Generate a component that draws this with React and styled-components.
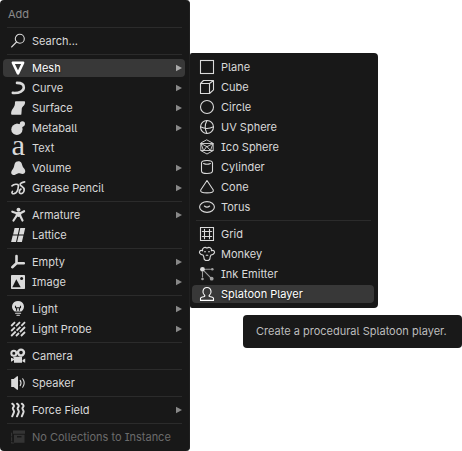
import React from 'react';
import styled, { createGlobalStyle } from 'styled-components';

const GlobalStyle = createGlobalStyle`
  *, *::before, *::after { box-sizing: border-box; }
  body {
    margin: 0;
    background: #fff;
    overflow: hidden;
    font-family: Inter, "Noto Sans", sans-serif;
    font-size: 11px;
    font-feature-settings: "cv08", "cv05";
  }
`;

const Desktop = styled.main`
  position: relative;
  width: 462px;
  height: 451px;
`;

const Panel = styled.div`
  display: flex;
  flex-direction: column;
  padding: 4px 4px 4px 3px;
  background: #181818;
  color: #d9d9d9;
`;

const MainMenu = styled(Panel)`
  width: 190px;
  height: 451px;
  border-radius: 4px;
  border-right: 1px solid #202020;
`;

const SubMenu = styled(Panel)`
  position: absolute;
  left: 190px;
  top: 53px;
  width: 188px;
  height: 255px;
  padding-left: 2px;
  border-radius: 2px 4px 4px 2px;
`;

const Title = styled.div`
  height: 20px;
  padding-left: 5px;
  line-height: 21px;
  color: #8a8a8a;
`;

const Item = styled.div`
  display: flex;
  align-items: center;
  height: 18px;
  margin: 1px 0;
  padding: 0 3px 0 7px;
  border-radius: 4px;
  white-space: nowrap;
  background: ${(p) => (p.$active ? '#383838' : 'transparent')};
  color: ${(p) => (p.$active ? '#fff' : p.$disabled ? '#6b6b6b' : 'inherit')};
  text-shadow: ${(p) => (p.$active ? '0 1px 2px #0009' : 'none')};
`;

const Label = styled.span`
  flex: 1;
  margin-left: 6px;
  line-height: 18px;
`;

const Separator = styled.div`
  height: 1px;
  margin: 3px 3px 3px 4px;
  flex: none;
  background: #2b2b2b;
`;

const Glyph = styled.svg`
  flex: none;
  width: 16px;
  height: 16px;
  overflow: visible;
  fill: none;
  stroke: ${(p) => (p.$dim ? '#343434' : p.$bright ? '#fff' : '#dadada')};
  color: ${(p) => (p.$dim ? '#343434' : p.$bright ? '#fff' : '#dadada')};
  stroke-width: 1.1;
  stroke-linecap: round;
  stroke-linejoin: round;
  .f { fill: currentColor; stroke: none; }
  .d { fill: #181818; stroke: none; }
`;

const Arrow = styled.svg`
  flex: none;
  width: 6px;
  height: 8px;
  fill: ${(p) => (p.$active ? '#aaa' : '#888')};
`;

const Tooltip = styled.div`
  position: absolute;
  left: 243px;
  top: 315px;
  width: 219px;
  height: 33px;
  padding-left: 13px;
  border-radius: 4px;
  background: #191919;
  color: #bdbdbd;
  line-height: 33px;
  white-space: nowrap;
`;

const SerifA = styled.text`
  font: 29px "Liberation Serif", serif;
  fill: currentColor;
  stroke: none;
`;

const icons = {
  search: <><circle cx="9.8" cy="5.8" r="4.5" /><path d="M6.5 9 1.6 14" /></>,
  mesh: <path d="M2.9 2.7h10.2L8 13.4z" strokeWidth="2.6" />,
  curve: <path d="M7 2.9C11 2.9 13.8 4.5 13.8 7.5s-4 6-11 5.4" strokeWidth="2.6" />,
  surface: <path className="f" d="M5.9 1.2h8.3q.9 0 .9.9C15.1 6.5 11.6 6 11.7 10l-.3 3.9q0 .9-1 .9H2q-.9 0-.9-1C1.1 8.5 5.3 8.5 5 2.1q0-.9.9-.9z" />,
  metaball: <><circle className="f" cx="6.9" cy="9.4" r="5.6" /><circle className="f" cx="12.4" cy="3.8" r="2.6" /><path className="f" d="M6 3.9c2.4-.5 3 .5 4 .2l3.8 2c-2 .8-1.7 1.7-1.4 3.4z" /></>,
  text: <SerifA x="1.5" y="14.7" textLength="13.6" lengthAdjust="spacingAndGlyphs">a</SerifA>,
  volume: <path className="f" d="M4.8 3.6C6 .6 10.3.6 11.6 3.2c.8 2 .8 3.4 2.1 4.8 2.8 2.9 1.5 6-1.2 6-2 0-3.2-1.2-4.7-.5-2.6 1.4-3.8 2-5.6 1-1.8-1.2-.8-3.7.6-5.2 1.4-1.8 1.2-3.7 2-5.7z" />,
  grease: <path d="M2 5.8C3.5 4.4 8.6 3 8.4 6.2 8.2 8.6 7.2 13 4 13.7c-1.6.3-2.7-.9-1.6-2.2M14.6 1.8C12 2.2 9.8 3.5 10.2 4.8c.4 1.5 4.2 2 4 5.2-.1 2.8-2.8 4.3-4.2 3.4-1.5-1-.5-3.4 1-4.3" strokeWidth="1.7" />,
  armature: <><circle className="f" cx="8.5" cy="2.7" r="2" /><path d="m2.3 4.7 4.5 1.5h3.5l3.8-2M7 6.5 6.5 9l-3 4.5M10 6.5 10.3 9l2.2 4.5M8.5 6v3" strokeWidth="2.2" /></>,
  lattice: <path className="f" d="M4.6 1h4.6L7.8 7.4H3.1zM10.3 1h4.9l-1.5 6.4H8.9zM2.7 8.4h4.8L6 15H1.1zM8.6 8.4h4.8L11.9 15H7.1z" />,
  empty: <path d="M6.5 2v7.2M6.5 9.3h7.3M6.5 9.3l-4.2 3.9" strokeWidth="2.6" />,
  image: <><rect className="f" x="1" y="1" width="14" height="14" rx=".7" /><path className="d" d="m2.3 13.2 4-8 4.4 8z" /><circle className="d" cx="11.6" cy="4.6" r="1.5" /></>,
  light: <><path className="f" d="M4.6 10.5C-.3 6.5 2.3 0 8 0s8.3 6.5 3.4 10.5z" /><path d="M5.5 4.8v1.9h5V4.8M6.6 6.7v3M9.4 6.7v3" stroke="#181818" strokeLinecap="butt" /><path d="M5.6 12.3h5M6.9 14.3h2.5" strokeWidth="1.1" /></>,
  probe: <path d="M1.2 5 5 1.2M1.2 10 4.9 6.3M6 5.2 10 1.2M1.2 15l4.5-4.5M6.6 9.6l3.8-3.8M11.3 4.9 15 1.2M6 15l3-3M10 11l5-5M11 15l4-4" strokeWidth="1.8" strokeLinecap="butt" />,
  camera: <><circle cx="3.8" cy="5.2" r="2.5" strokeWidth="2" /><circle cx="11" cy="4.6" r="3" strokeWidth="2.4" /><path className="f" d="M3 8.7h9v6H4V12l-3 1.7v-4l3 1zM12.5 12l2.7-1.6v4.3l-2.7-1.2z" /></>,
  speaker: <><path className="f" d="M1.2 4h2.5L7 1.3h1v13.4H7L3.7 12H1.2z" /><path d="M10.2 5.4q1.7 2.6 0 5.2M12.7 3.8q3 4.2 0 8.4" /></>,
  force: <path d="M2.2 1.7c3 2 1.5 3 .7 4.3-.8 1.3 2 2.5 1 4.3l-1.7 4M7 1.7c3 2 1.5 3 .7 4.3-.8 1.3 2 2.5 1 4.3l-1.7 4M11.8 1.7c3 2 1.5 3 .7 4.3-.8 1.3 2 2.5 1 4.3l-1.7 4" strokeWidth="2" />,
  collection: <><path className="f" d="M3 1.5h12v3.2H3zM4 5.7h10.5v8H4z" /><path className="d" d="M7 7h4.5v1.5H7z" /><path d="M1.6 4v10h3" strokeDasharray="3 1.5" /></>,
  plane: <rect x="1.5" y="1.5" width="13" height="13" strokeLinejoin="miter" />,
  cube: <path d="M1.5 4.5h9v10h-9zM1.5 4.5l3-3h10v9.3l-4 3.7M10.5 4.5l4-3" />,
  circle: <circle cx="8" cy="8" r="6.5" />,
  uv: <><circle cx="8" cy="8" r="6.5" /><path d="M8 1.5q-3.6 6.5 0 13M1.5 7.8q6.5 3.3 13 0" /></>,
  ico: <path d="m8 1 6.2 3.4v7.2L8 15l-6.2-3.4V4.4zM2 4.5h12M4.5 11.5 2 4.5l6 3.2L14 4.5l-2.5 7-3.5-3.8zM2 11.5h12" strokeWidth=".9" />,
  cylinder: <path d="M2.5 4q0-2.5 5.5-2.5T13.5 4v8q0 2.5-5.5 2.5T2.5 12zM4.6 4.5q3.4 1.6 6.8 0" />,
  cone: <path d="M8 1.5 1.7 11q-.8 2.9 6.3 2.9t6.3-2.9z" />,
  torus: <><ellipse cx="8" cy="8" rx="7.4" ry="5.4" /><path d="M5.4 7q2.6 2.4 5.2 0" /></>,
  grid: <path d="M1.5 1.5h13v13h-13zM5.5 3.3v9.4M10.5 3.3v9.4M3.3 5.5h9.4M3.3 10.5h9.4" strokeLinejoin="miter" />,
  monkey: <path d="M4 9C1 8.5-.2 6.4.8 5.1c.8-1 2.4-.8 2.8-.3C2.8 1.6 6 .5 8 2.2c2-1.7 5.2-.6 4.4 2.6.4-.5 2-.7 2.8.3 1 1.3-.2 3.4-3.2 3.9-.4 1-1 1.4-1 3.3 0 3-6 3-6 0C5 10.4 4.4 10 4 9zM5.5 5.8h1M9.5 5.8h1M7.2 9.2h1.6" />,
  emitter: <><circle className="f" cx="3.5" cy="3.3" r="2.4" /><path d="M6.5 3.3h5M3.5 6v5M5.5 5.3l5.8 6" stroke="#999" /><circle className="f" cx="13.3" cy="3.3" r="1.3" opacity=".7" /><circle className="f" cx="3.5" cy="13" r="1.3" opacity=".7" /><circle className="f" cx="12.7" cy="12.7" r="1.9" opacity=".7" /></>,
  player: <path d="M1.5 14.4v-1.8q0-1 1.1-1.3l2.8-.8q.8-.5.1-1.3C4 7.9 3.7 6.8 4 5.2 4.8.3 11.2.3 12 5.2c.3 1.6 0 2.7-1.5 4-.7.8-.7 1 .1 1.3l2.8.8q1.1.3 1.1 1.3v1.8z" />,
};

const mainGroups = [
  [['search', 'Search...']],
  [
    ['mesh', 'Mesh', true],
    ['curve', 'Curve', true],
    ['surface', 'Surface', true],
    ['metaball', 'Metaball', true],
    ['text', 'Text'],
    ['volume', 'Volume', true],
    ['grease', 'Grease Pencil', true],
  ],
  [['armature', 'Armature', true], ['lattice', 'Lattice']],
  [['empty', 'Empty', true], ['image', 'Image', true]],
  [['light', 'Light', true], ['probe', 'Light Probe', true]],
  [['camera', 'Camera']],
  [['speaker', 'Speaker']],
  [['force', 'Force Field', true]],
  [['collection', 'No Collections to Instance']],
];

const meshGroups = [
  [
    ['plane', 'Plane'],
    ['cube', 'Cube'],
    ['circle', 'Circle'],
    ['uv', 'UV Sphere'],
    ['ico', 'Ico Sphere'],
    ['cylinder', 'Cylinder'],
    ['cone', 'Cone'],
    ['torus', 'Torus'],
  ],
  [
    ['grid', 'Grid'],
    ['monkey', 'Monkey'],
    ['emitter', 'Ink Emitter'],
    ['player', 'Splatoon Player'],
  ],
];

function MenuItem({ icon, label, arrow, active, disabled }) {
  return (
    <Item $active={active} $disabled={disabled}>
      <Glyph viewBox="0 0 16 16" $bright={active} $dim={disabled}>{icons[icon]}</Glyph>
      <Label>{label}</Label>
      {arrow && <Arrow viewBox="0 0 6 8" $active={active}><path d="M0 .7v6.6L6 4z" /></Arrow>}
    </Item>
  );
}

function Groups({ groups, active, leading }) {
  return groups.map((group, i) => (
    <React.Fragment key={group[0][0]}>
      {(leading || i > 0) && <Separator />}
      {group.map(([icon, label, arrow]) => (
        <MenuItem
          key={icon}
          icon={icon}
          label={label}
          arrow={arrow}
          active={icon === active}
          disabled={icon === 'collection'}
        />
      ))}
    </React.Fragment>
  ));
}

export default function App() {
  return (
    <>
      <GlobalStyle />
      <Desktop>
        <MainMenu>
          <Title>Add</Title>
          <Groups groups={mainGroups} active="mesh" leading />
        </MainMenu>
        <SubMenu>
          <Groups groups={meshGroups} active="player" />
        </SubMenu>
        <Tooltip>Create a procedural Splatoon player.</Tooltip>
      </Desktop>
    </>
  );
}
